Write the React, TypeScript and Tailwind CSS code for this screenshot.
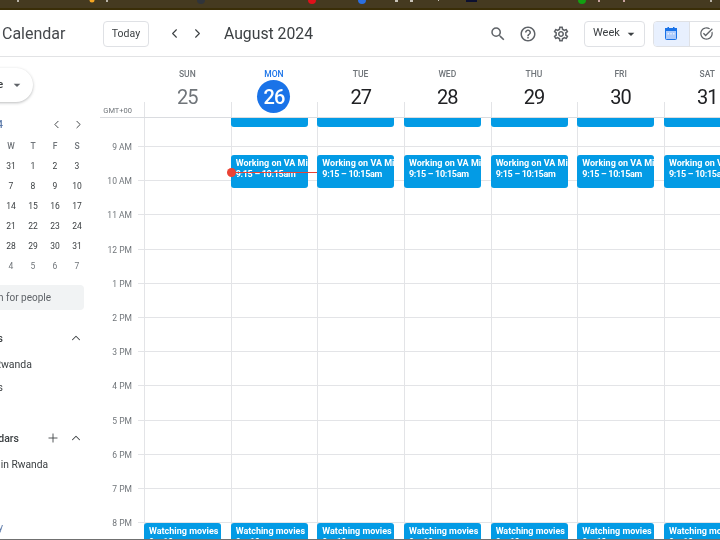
import { ChevronLeft, ChevronRight, ChevronUp, Plus } from "lucide-react";
import {
  MdArrowDropDown,
  MdHelpOutline,
  MdOutlineSettings,
  MdOutlineTaskAlt,
  MdSearch,
} from "react-icons/md";

const DAYS = [
  { label: "SUN", date: 25 },
  { label: "MON", date: 26 },
  { label: "TUE", date: 27 },
  { label: "WED", date: 28 },
  { label: "THU", date: 29 },
  { label: "FRI", date: 30 },
  { label: "SAT", date: 31 },
];

const HOURS = ["9 AM", "10 AM", "11 AM", "12 PM", "1 PM", "2 PM", "3 PM", "4 PM", "5 PM", "6 PM", "7 PM", "8 PM"];

const MINI_WEEKS = [
  [28, 29, 30, 31, 1, 2, 3],
  [4, 5, 6, 7, 8, 9, 10],
  [11, 12, 13, 14, 15, 16, 17],
  [18, 19, 20, 21, 22, 23, 24],
  [25, 26, 27, 28, 29, 30, 31],
  [1, 2, 3, 4, 5, 6, 7],
];

function Event({ title, time, className }: { title: string; time: string; className: string }) {
  return (
    <div className={`-ml-px w-[77px] shrink-0 overflow-hidden rounded-[3px] bg-[#039be5] pl-[5px] text-[9px] leading-[11px] font-bold whitespace-nowrap text-white ${className}`}>
      <div className="pt-[3px]">{title}</div>
      <div className="tracking-[-0.3px]">{time}</div>
    </div>
  );
}

function TopBar() {
  return (
    <header className="flex h-[47px] shrink-0 items-center overflow-hidden border-b border-[#e2e3e5] pt-[1px] pl-[2px] text-[#3c4043]">
      <span className="w-[101px] shrink-0 text-[16px] text-[#45484c]">Calendar</span>
      <button className="h-[26px] w-[46px] shrink-0 rounded-[4px] border border-[#dfe1e5] text-[10.5px] text-[#3c4043]">Today</button>
      <ChevronLeft className="ml-[18px] h-[15px] w-[15px] shrink-0" strokeWidth={1.75} />
      <ChevronRight className="ml-[8px] h-[15px] w-[15px] shrink-0" strokeWidth={1.75} />
      <span className="ml-[19px] text-[15.75px] text-[#3c4043]">August 2024</span>
      <div className="flex-1" />
      <MdSearch className="h-[18px] w-[18px] shrink-0 text-[#5f6368]" />
      <MdHelpOutline className="ml-[12px] h-[18px] w-[18px] shrink-0 text-[#5f6368]" />
      <MdOutlineSettings className="ml-[15px] h-[18px] w-[18px] shrink-0 text-[#5f6368]" />
      <button className="ml-[14px] flex h-[26px] w-[61px] shrink-0 items-center rounded-[4px] border border-[#dfe1e5] pl-[8px] text-[11px]">
        Week
        <MdArrowDropDown className="ml-[3px] h-[16px] w-[16px] text-[#3c4043]" />
      </button>
      <div className="mr-[-14px] ml-[8px] flex h-[26px] w-[81px] shrink-0 overflow-hidden rounded-[4px] border border-[#dfe1e5]">
        <div className="flex w-[36px] items-center justify-center border-r border-[#dfe1e5] bg-[#e8f0fe] pr-[2px]">
          <svg viewBox="0 0 12 13" className="h-[13px] w-[12px]">
            <rect x="0.5" y="1.5" width="11" height="11" rx="1" fill="#aecbfa" stroke="#1a73e8" />
            <rect x="0" y="1" width="12" height="3" fill="#1a73e8" />
            <rect x="2.5" y="0" width="1.5" height="2" fill="#1a73e8" />
            <rect x="8" y="0" width="1.5" height="2" fill="#1a73e8" />
            <rect x="2.5" y="6" width="1.5" height="1.5" fill="#e8f0fe" />
            <rect x="5.25" y="6" width="1.5" height="1.5" fill="#e8f0fe" />
            <rect x="8" y="6" width="1.5" height="1.5" fill="#e8f0fe" />
          </svg>
        </div>
        <div className="flex w-[36px] items-center pl-[9px]">
          <MdOutlineTaskAlt className="h-[15px] w-[15px] text-[#5f6368]" />
        </div>
      </div>
    </header>
  );
}

function Sidebar() {
  return (
    <aside className="flex w-[100px] shrink-0 flex-col overflow-hidden text-[#3c4043]">
      <button className="mt-[11px] -ml-[60px] flex h-[34px] w-[93px] shrink-0 items-center justify-end rounded-full bg-white pr-[8px] text-[10.5px] font-medium shadow-[0_1px_3px_rgba(60,64,67,0.35)]">
        Create
        <MdArrowDropDown className="ml-[6px] h-[16px] w-[16px] text-[#5f6368]" />
      </button>

      <div className="mt-[12px] flex h-[20px] shrink-0 items-center">
        <div className="flex w-[3px] justify-end whitespace-nowrap text-[10px] font-medium text-[#5a78a8]">August 2024</div>
        <ChevronLeft className="ml-[47px] h-[13px] w-[13px] shrink-0" strokeWidth={1.75} />
        <ChevronRight className="ml-[9px] h-[13px] w-[13px] shrink-0" strokeWidth={1.75} />
      </div>

      <div className="mt-[2px] -ml-[66px] grid w-[154px] shrink-0 grid-cols-7 text-center text-[8.5px] leading-[20px]">
        {["S", "M", "T", "W", "T", "F", "S"].map((d, i) => (
          <div key={i} className="font-medium text-[#70757a]">{d}</div>
        ))}
        {MINI_WEEKS.flat().map((d, i) => (
          <div key={i} className={i >= 35 ? "text-[#70757a]" : "text-[#3c4043]"}>{d}</div>
        ))}
      </div>

      <div className="mt-[9px] flex h-[25px] w-[84px] shrink-0 items-center rounded-r-[4px] bg-[#f1f3f4]">
        <div className="flex w-[51px] justify-end text-[10px] whitespace-nowrap text-[#5f6368]">Search for people</div>
      </div>

      <div className="mt-[18px] flex h-[20px] shrink-0 items-center">
        <div className="flex w-[3px] justify-end pt-[1px] text-[10.5px] font-medium whitespace-nowrap">My calendars</div>
        <ChevronUp className="ml-[66px] h-[14px] w-[14px] shrink-0" strokeWidth={1.75} />
      </div>
      <div className="mt-[4px] flex h-[24px] w-[32px] shrink-0 items-center justify-end pt-[1px] text-[10.5px] whitespace-nowrap">Rwanda</div>
      <div className="flex h-[23px] w-[3px] shrink-0 items-center justify-end pt-[1px] text-[10.5px] whitespace-nowrap">Tasks</div>

      <div className="mt-[29px] flex h-[20px] shrink-0 items-center">
        <div className="flex w-[19px] justify-end pt-[1px] text-[10.5px] font-medium whitespace-nowrap">Other calendars</div>
        <Plus className="ml-[27px] h-[14px] w-[14px] shrink-0" strokeWidth={1.5} />
        <ChevronUp className="ml-[9px] h-[14px] w-[14px] shrink-0" strokeWidth={1.75} />
      </div>
      <div className="mt-[4px] flex h-[24px] w-[48px] shrink-0 items-center justify-end pt-[1px] text-[10.25px] whitespace-nowrap">Holidays in Rwanda</div>
      <div className="mt-[41px] flex h-[20px] w-[3px] shrink-0 items-center justify-end text-[10px] whitespace-nowrap text-[#5a78a8]">Privacy</div>
    </aside>
  );
}

function DayHeaders() {
  return (
    <div className="grid h-[61px] shrink-0 grid-cols-[44px_repeat(7,86.67px)] border-b border-[#dadce0]">
      <div className="flex items-end justify-end pr-[12px] text-[7.5px] leading-[12px] text-[#70757a]">GMT+00</div>
      {DAYS.map((d) => (
        <div key={d.label} className="relative flex flex-col items-center pt-[11px]">
          <div className={`text-[8.5px] leading-[13px] font-medium ${d.date === 26 ? "text-[#1a73e8]" : "text-[#70757a]"}`}>{d.label}</div>
          <div
            className={`relative z-10 mt-[-1px] flex h-[33px] w-[33px] items-center justify-center rounded-full text-[20px] tracking-[-1px] ${
              d.date === 26 ? "bg-[#1a73e8] font-medium text-white" : d.date === 25 ? "text-[#70757a]" : "text-[#202124]"
            }`}
          >
            {d.date}
          </div>
          <div className="absolute bottom-0 left-0 h-[15px] border-l border-[#e3e4e7]" />
        </div>
      ))}
    </div>
  );
}

function TimeGrid() {
  return (
    <div className="relative flex-1 overflow-hidden">
      {HOURS.map((h, i) => (
        <div key={h} className={`flex items-end ${i === 0 ? "h-[29px]" : "h-[34.2px]"}`}>
          <div className="w-[32px] shrink-0 translate-y-1/2 text-right text-[8.5px] leading-[12px] text-[#70757a]">{h}</div>
          <div className="ml-[6px] flex-1 border-b border-[#e3e4e7]" />
        </div>
      ))}

      <div className="absolute inset-0 grid grid-cols-[44px_repeat(7,86.67px)]">
        <div />
        {DAYS.map((d) => (
          <div key={d.label} className="relative flex flex-col border-l border-[#e3e4e7]">
            <div className={`-ml-px h-[9px] w-[77px] shrink-0 rounded-b-[3px] bg-[#039be5] ${d.date === 25 ? "invisible" : ""}`} />
            <Event
              title="Working on VA Milestone"
              time="9:15 – 10:15am"
              className={`mt-[27.5px] h-[33px] ${d.date === 25 ? "invisible" : ""}`}
            />
            <Event title="Watching movies" time="9 – 10pm" className="mt-[335px] h-[30px]" />
            {d.date === 26 && (
              <div className="absolute top-[53.5px] left-0 h-[1px] w-[87px] bg-[#ea4335]">
                <div className="absolute top-[-4px] left-[-5px] h-[9px] w-[9px] rounded-full bg-[#ea4335]" />
              </div>
            )}
          </div>
        ))}
      </div>
    </div>
  );
}

export default function App() {
  return (
    <div className="flex h-[540px] w-[720px] flex-col overflow-hidden bg-white font-['Roboto',sans-serif] blur-[0.3px]">
      <div className="relative h-[10px] shrink-0 border-b-2 border-[#3a2e08] bg-[#453a20]">
        <svg viewBox="0 0 720 8" className="h-[8px] w-[720px]">
          <rect x="17" y="0" width="2" height="2" fill="#b8b3a8" />
          <circle cx="92" cy="0" r="2.5" fill="#f5a623" />
          <rect x="106" y="0" width="2" height="2" fill="#b8b3a8" />
          <circle cx="201" cy="0" r="4" fill="#30343a" />
          <circle cx="312" cy="0" r="4" fill="#e0101a" />
          <circle cx="362" cy="0" r="4" fill="#2b6fe0" />
          <rect x="395" y="0" width="3" height="2" fill="#c8c3b8" />
          <rect x="410" y="0" width="3" height="2" fill="#c8c3b8" />
          <rect x="438" y="0" width="1" height="1" fill="#c8c3b8" />
          <rect x="466" y="0" width="11" height="2" fill="#0c1030" />
          <circle cx="582" cy="0" r="4" fill="#12a012" />
          <rect x="598" y="0" width="2" height="2" fill="#c8a3a0" />
          <rect x="623" y="0" width="2" height="2" fill="#c8a3a0" />
          <rect x="710" y="0" width="2" height="2" fill="#b8b3a8" />
        </svg>
      </div>
      <TopBar />
      <div className="flex min-h-0 flex-1">
        <Sidebar />
        <div className="flex min-w-0 flex-1 flex-col overflow-hidden">
          <DayHeaders />
          <TimeGrid />
        </div>
      </div>
      <div className="h-px shrink-0 bg-[#707070]" />
    </div>
  );
}
